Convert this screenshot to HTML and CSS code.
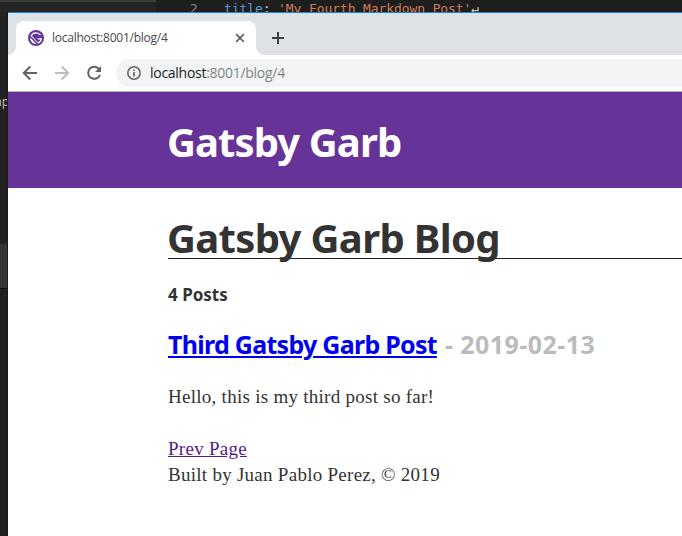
FILE: index.html
```html
<!DOCTYPE html>
<html lang="en">
<head>
<meta charset="utf-8">
<title>Gatsby Garb</title>
<link rel="stylesheet" href="styles.css">
</head>
<body>
<div class="desktop">
  <div class="editor">
    <div class="editor-left"></div>
    <div class="editor-code"><span class="line-number">2</span><span><span class="key">title</span><span class="punct">: </span><span class="string">'My Fourth Markdown Post'</span><span class="punct">↵</span></span></div>
  </div>
  <div class="row">
    <aside class="sidebar"><span class="fragment">ap</span><span class="selection"></span></aside>
    <div class="browser">
      <div class="tabs">
        <div class="tab">
          <svg class="favicon" viewBox="0 0 16 16"><circle cx="8" cy="8" r="8" fill="#663399"/><path d="M2 7.5L8.5 14A6.1 6.1 0 0 1 2 7.5Z" fill="#fff"/><path d="M2.5 5.8L10.2 13.6C12.4 12.8 14 10.7 14 8.2H9.7v1.2h2.8a4.8 4.8 0 0 1-2.6 2.8L3.9 6.1A4.6 4.6 0 0 1 12 5.6l1-.8A6 6 0 0 0 2.5 5.8Z" fill="#fff"/></svg>
          <span class="tab-title">localhost:8001/blog/4</span>
          <svg class="close" viewBox="0 0 10 10"><path d="M1.2 1.2l7.6 7.6M8.8 1.2L1.2 8.8" stroke="#5f6368" stroke-width="1.7"/></svg>
        </div>
        <svg class="plus" viewBox="0 0 12 12"><path d="M6 0v12M0 6h12" stroke="#3c4043" stroke-width="2"/></svg>
      </div>
      <div class="toolbar">
        <svg class="nav" viewBox="0 0 16 16"><path d="M15 8H2M8.3 1.5L1.8 8l6.5 6.5" fill="none" stroke="#5f6368" stroke-width="2"/></svg>
        <svg class="nav" viewBox="0 0 16 16"><path d="M1 8h13M7.7 1.5L14.2 8l-6.5 6.5" fill="none" stroke="#babcbe" stroke-width="2"/></svg>
        <svg class="nav" viewBox="0 0 16 16"><path d="M13.3 4.3A6.1 6.1 0 1 0 14 9.8" fill="none" stroke="#5f6368" stroke-width="2"/><path d="M15 1v6H9z" fill="#5f6368"/></svg>
        <div class="address">
          <svg class="info" viewBox="0 0 14 14"><circle cx="7" cy="7" r="6.2" fill="none" stroke="#5f6368" stroke-width="1.5"/><path d="M7 6v4.5M7 3.4v1.5" stroke="#5f6368" stroke-width="1.6"/></svg>
          <span class="url">localhost<span class="path">:8001/blog/4</span></span>
        </div>
      </div>
      <header class="banner"><h1>Gatsby Garb</h1></header>
      <main class="content">
        <h1 class="page-title">Gatsby Garb Blog</h1>
        <h4 class="count">4 Posts</h4>
        <h3 class="post"><a href="#">Third Gatsby Garb Post</a><span class="date">- 2019-02-13</span></h3>
        <p class="excerpt">Hello, this is my third post so far!</p>
        <a class="prev" href="#">Prev Page</a>
        <footer class="credit">Built by Juan Pablo Perez, © 2019</footer>
      </main>
    </div>
  </div>
</div>
</body>
</html>
```
FILE: styles.css
```css
* { box-sizing: border-box; }
body { margin: 0; overflow: hidden; }
svg { display: block; flex: none; }
h1, h3, h4, p { margin: 0; font-family: "Noto Sans", "Open Sans", sans-serif; font-weight: 700; white-space: nowrap; }
.desktop { width: 682px; height: 536px; background: #222; overflow: hidden; }
.editor { display: flex; height: 12px; overflow: hidden; background: #1e1e1e; }
.editor-left { width: 156px; background: #252526; border-top: 2px solid #3c3c3c; }
.editor-code { display: flex; padding-left: 34px; font: 13px/17px "DejaVu Sans Mono", monospace; letter-spacing: -.1px; white-space: pre; }
.line-number { width: 34px; color: #858585; }
.key { color: #569cd6; }
.punct { color: #d4d4d4; }
.string { color: #ce7b55; }
.row { display: flex; height: 524px; }
.sidebar { width: 8px; flex: none; overflow: hidden; background: #222; border-right: 1px solid #1b1b1b; }
.fragment { display: block; height: 232px; padding-top: 81px; margin-left: -5px; font: 12px/18px "Noto Sans", sans-serif; color: #bbb; }
.selection { display: block; height: 45px; background: #37373b; border-bottom: 1px solid #111; }
.browser { flex: 1; min-width: 0; background: #fff; border-top: 1px solid #1883d7; }
.tabs { display: flex; height: 42px; padding: 8px 0 0 8px; background: #dee1e6; }
.tab { position: relative; display: flex; align-items: center; width: 240px; height: 34px; padding: 0 11px 0 12px; background: #fff; border-radius: 8px 8px 0 0; }
.tab::before, .tab::after { content: ""; position: absolute; bottom: 0; width: 8px; height: 8px; }
.tab::before { left: -8px; background: radial-gradient(circle at 0 0, transparent 7.5px, #fff 8px); }
.tab::after { right: -8px; background: radial-gradient(circle at 100% 0, transparent 7.5px, #fff 8px); }
.favicon { width: 16px; height: 16px; }
.tab-title { flex: 1; margin-left: 8px; font: 12px/16px "Open Sans", sans-serif; letter-spacing: -.24px; color: #45494d; }
.close { width: 10px; height: 10px; }
.plus { width: 12px; height: 12px; margin: 11px 0 0 16px; }
.toolbar { display: flex; align-items: center; height: 37px; padding-left: 14px; gap: 16px; border-bottom: 1px solid #b6b4b6; }
.nav { width: 16px; height: 16px; }
.address { display: flex; align-items: center; flex: 1; height: 28px; margin-left: -2px; padding-left: 11px; background: #f1f3f4; border-radius: 14px 0 0 14px; }
.info { width: 14px; height: 14px; }
.url { margin-left: 9px; font: 14px/20px "Open Sans", sans-serif; letter-spacing: -.28px; color: #202124; }
.path { color: #80868b; }
.banner { height: 96px; padding: 25px 0 0 159px; background: #663399; color: #fff; }
.banner h1, .page-title { font-size: 40px; line-height: 50px; letter-spacing: -.9px; }
.content { padding: 25px 0 0 160px; color: #333; }
.content .page-title { height: 46px; border-bottom: 1px solid #222; letter-spacing: -.65px; text-indent: -1px; }
.count { margin-top: 23px; font-size: 17px; line-height: 26px; }
.post { margin-top: 19px; font-size: 25px; line-height: 34px; }
.post a { color: #00e; letter-spacing: -.72px; text-decoration-thickness: 2px; text-underline-offset: 2px; }
.date { margin-left: 8px; color: #bbb; letter-spacing: .45px; }
.excerpt, .prev, .credit { display: block; font: 19px/26px "Liberation Serif", serif; letter-spacing: .27px; }
.excerpt { margin: 23px 0 26px; }
.prev { width: max-content; color: #551a8b; }
```
